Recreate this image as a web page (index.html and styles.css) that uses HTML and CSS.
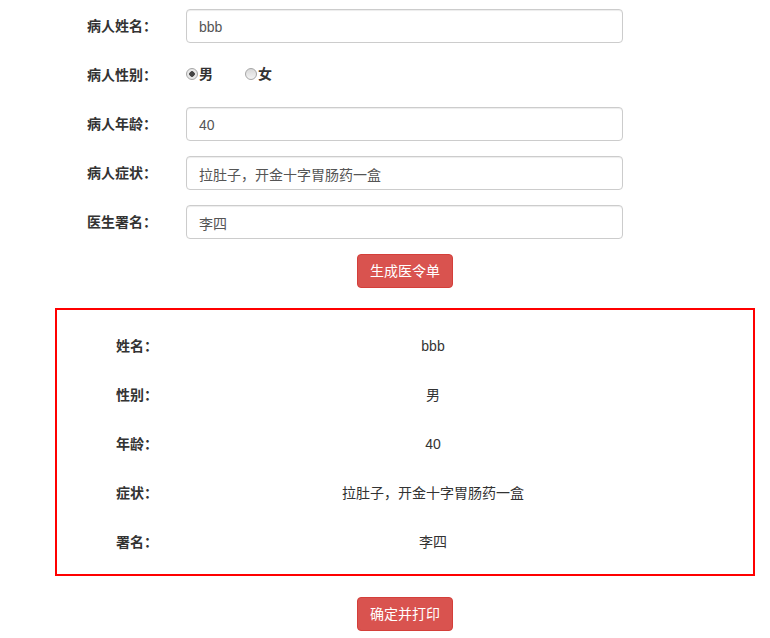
FILE: index.html
```html
<!DOCTYPE html>
<html lang="zh-CN">

<head>
    <meta charset="UTF-8">
    <meta name="viewport" content="width=device-width, initial-scale=1.0">
    <title>医令单</title>
    <link rel="stylesheet" href="styles.css">
</head>

<body>
    <main class="page">
        <form class="form">
            <div class="form-row">
                <label class="form-label">病人姓名：</label>
                <input class="form-input" type="text" value="bbb">
            </div>
            <div class="form-row">
                <label class="form-label">病人性别：</label>
                <div class="radios">
                    <label class="radio"><input type="radio" name="sex" checked>男</label>
                    <label class="radio"><input type="radio" name="sex">女</label>
                </div>
            </div>
            <div class="form-row">
                <label class="form-label">病人年龄：</label>
                <input class="form-input" type="text" value="40">
            </div>
            <div class="form-row">
                <label class="form-label">病人症状：</label>
                <input class="form-input" type="text" value="拉肚子，开金十字胃肠药一盒">
            </div>
            <div class="form-row">
                <label class="form-label">医生署名：</label>
                <input class="form-input" type="text" value="李四">
            </div>
            <div class="actions">
                <button class="btn-danger" type="button">生成医令单</button>
            </div>
        </form>

        <section class="order">
            <div class="order-row">
                <span class="order-label">姓名：</span>
                <span class="order-value">bbb</span>
            </div>
            <div class="order-row">
                <span class="order-label">性别：</span>
                <span class="order-value">男</span>
            </div>
            <div class="order-row">
                <span class="order-label">年龄：</span>
                <span class="order-value">40</span>
            </div>
            <div class="order-row">
                <span class="order-label">症状：</span>
                <span class="order-value">拉肚子，开金十字胃肠药一盒</span>
            </div>
            <div class="order-row">
                <span class="order-label">署名：</span>
                <span class="order-value">李四</span>
            </div>
        </section>

        <div class="actions print">
            <button class="btn-danger" type="button">确定并打印</button>
        </div>
    </main>
</body>

</html>
```

FILE: styles.css
```css
body {
    margin: 0;
    font-family: "Liberation Sans", "Noto Sans CJK SC", sans-serif;
    font-size: 14px;
    line-height: 1.42857;
    color: #333;
    background-color: #fff;
}

.page {
    width: 700px;
    margin-left: 55px;
    padding-top: 9px;
}

.form-row {
    display: flex;
    align-items: center;
    height: 34px;
    margin-bottom: 15px;
}

.form-label {
    width: 102px;
    padding-top: 1px;
    text-align: right;
    font-weight: bold;
}

.form-input {
    box-sizing: border-box;
    width: 437px;
    height: 34px;
    margin-left: 29px;
    padding: 7px 12px 5px;
    font-family: inherit;
    font-size: 14px;
    color: #555;
    background-color: #fff;
    border: 1px solid #ccc;
    border-radius: 4px;
    box-shadow: inset 0 1px 1px rgba(0, 0, 0, .075);
}

.radios {
    display: flex;
    align-items: center;
    margin-left: 29px;
}

.radio {
    display: flex;
    align-items: center;
    margin-right: 32px;
    font-weight: bold;
}

.radio input {
    appearance: none;
    width: 12px;
    height: 12px;
    margin: 0 1px 1px 0;
    border: 1px solid #a6a6a6;
    border-radius: 50%;
    background: linear-gradient(#d8d8d8, #f4f4f4);
}

.radio input:checked {
    background: radial-gradient(circle, #444 0, #444 2.5px, #e8e8e8 3px, #e8e8e8 100%);
}

.actions {
    display: flex;
    justify-content: center;
    margin-bottom: 20px;
}

.btn-danger {
    padding: 7px 12px 5px;
    font-family: inherit;
    font-size: 14px;
    line-height: 1.42857;
    color: #fff;
    background-color: #d9534f;
    border: 1px solid #d43f3a;
    border-radius: 4px;
    cursor: pointer;
}

.order {
    border: 2px solid #f00;
    padding: 20px 0 14px;
}

.order-row {
    display: flex;
    align-items: center;
    height: 34px;
    margin-bottom: 15px;
}

.order-row:last-child {
    margin-bottom: 0;
}

.order-label {
    width: 101px;
    padding-top: 1px;
    text-align: right;
    font-weight: bold;
}

.order-value {
    width: 494px;
    margin-left: 28px;
    padding-top: 1px;
    text-align: center;
}

.print {
    margin-top: 21px;
}
```
